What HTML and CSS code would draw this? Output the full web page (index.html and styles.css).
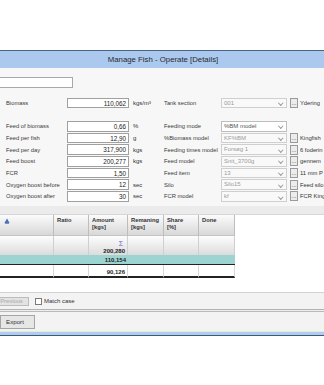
FILE: index.html
```html
<!DOCTYPE html>
<html>
<head>
<meta charset="utf-8">
<link rel="stylesheet" href="styles.css">
</head>
<body>
<div class="window">
  <div class="titlebar">Manage Fish - Operate [Details]</div>
  <div class="content">
    <div class="search"><div class="searchbox"></div></div>
    <div class="form">
      <div class="col-left">
        <div class="lrow"><span class="lbl">Biomass</span><span class="box">110,062</span><span class="unit">kgs/m³</span></div>
        <div class="lrow"></div>
        <div class="lrow"><span class="lbl">Feed of biomass</span><span class="box">0,66</span><span class="unit">%</span></div>
        <div class="lrow"><span class="lbl">Feed per fish</span><span class="box">12,90</span><span class="unit">g</span></div>
        <div class="lrow"><span class="lbl">Feed per day</span><span class="box">317,900</span><span class="unit">kgs</span></div>
        <div class="lrow"><span class="lbl">Feed boost</span><span class="box">200,277</span><span class="unit">kgs</span></div>
        <div class="lrow"><span class="lbl">FCR</span><span class="box">1,50</span><span class="unit"></span></div>
        <div class="lrow"><span class="lbl">Oxygen boost before</span><span class="box">12</span><span class="unit">sec</span></div>
        <div class="lrow"><span class="lbl">Oxygen boost after</span><span class="box">30</span><span class="unit">sec</span></div>
      </div>
      <div class="col-right">
        <div class="rrow"><span class="rlbl">Tank section</span><span class="combo">001<i class="arr"></i></span><span class="dots">...</span><span class="rtext">Ydering</span></div>
        <div class="rrow"></div>
        <div class="rrow"><span class="rlbl">Feeding mode</span><span class="combo active">%BM model<i class="arr"></i></span></div>
        <div class="rrow"><span class="rlbl">%Biomass model</span><span class="combo">KF%BM<i class="arr"></i></span><span class="dots">...</span><span class="rtext">Kingfish</span></div>
        <div class="rrow"><span class="rlbl">Feeding times model</span><span class="combo">Forsøg 1<i class="arr"></i></span><span class="dots">...</span><span class="rtext">6 foderin</span></div>
        <div class="rrow"><span class="rlbl">Feed model</span><span class="combo">Snit_3700g<i class="arr"></i></span><span class="dots">...</span><span class="rtext">gennem</span></div>
        <div class="rrow"><span class="rlbl">Feed item</span><span class="combo">13<i class="arr"></i></span><span class="dots">...</span><span class="rtext">11 mm P</span></div>
        <div class="rrow"><span class="rlbl">Silo</span><span class="combo">Silo15<i class="arr"></i></span><span class="dots">...</span><span class="rtext">Feed silo</span></div>
        <div class="rrow"><span class="rlbl">FCR model</span><span class="combo">kf<i class="arr"></i></span><span class="dots">...</span><span class="rtext">FCR King</span></div>
      </div>
    </div>
    <div class="splitter"></div>
    <div class="gridarea">
      <div class="grid">
        <div class="hd first"><svg width="6" height="6" viewBox="0 0 6 6"><path d="M3 0.5 L5.6 5 L0.4 5 Z" fill="#4d6fb8"/><path d="M1 5.6 H5" stroke="#4d6fb8" stroke-width="0.8"/></svg></div>
        <div class="hd">Ratio</div>
        <div class="hd">Amount<br>[kgs]</div>
        <div class="hd">Remaning<br>[kgs]</div>
        <div class="hd">Share<br>[%]</div>
        <div class="hd">Done</div>

        <div class="r1"></div>
        <div class="r1"></div>
        <div class="r1 num"><span class="sigma">Σ</span><b>200,280</b></div>
        <div class="r1"></div>
        <div class="r1"></div>
        <div class="r1"></div>

        <div class="r2"></div>
        <div class="r2"></div>
        <div class="r2 num"><b>110,154</b></div>
        <div class="r2"></div>
        <div class="r2"></div>
        <div class="r2"></div>

        <div class="r3"></div>
        <div class="r3"></div>
        <div class="r3 num"><b>90,126</b></div>
        <div class="r3"></div>
        <div class="r3"></div>
        <div class="r3"></div>
      </div>
    </div>
    <div class="bar1">
      <span class="btn disabled">Previous</span>
      <span class="check"></span>
      <span class="chklbl">Match case</span>
    </div>
    <div class="sep"></div>
    <div class="bar2"><span class="btn export">Export</span></div>
    <div class="bottomedge"></div>
  </div>
</div>
</body>
</html>
```

FILE: styles.css
```css
html, body {
  margin: 0;
  padding: 0;
  background: #ffffff;
}
body {
  width: 324px;
  height: 385px;
  overflow: hidden;
  font-family: "Liberation Sans", Arial, sans-serif;
  color: #333;
}
.window {
  margin-top: 50px;
  border-top: 1px solid #4a6380;
}
.titlebar {
  height: 17px;
  background: #abc8ef;
  text-align: center;
  font-size: 7.8px;
  line-height: 17px;
  color: #2a2a2a;
  padding-left: 2px;
}
.content {
  background: #f7f7f7;
}
.search {
  padding-top: 9px;
  height: 11px;
}
.searchbox {
  width: 72px;
  height: 9px;
  background: #fff;
  border: 1px solid #a8a8a8;
  border-left: none;
}
.form {
  display: flex;
  margin-top: 9px;
  font-size: 5.8px;
  overflow: hidden;
}
.form span {
  flex-shrink: 0;
  white-space: nowrap;
}
.col-left {
  width: 163px;
  flex-shrink: 0;
}
.col-right {
  flex-shrink: 0;
}
.lrow, .rrow {
  height: 11.7px;
  display: flex;
  align-items: center;
}
.lbl {
  width: 67px;
  padding-left: 6px;
  box-sizing: border-box;
  color: #3a3a3a;
}
.box {
  width: 62px;
  height: 10.7px;
  box-sizing: border-box;
  border: 1px solid #a0a0a0;
  background: #fff;
  text-align: right;
  font-size: 6.3px;
  line-height: 9px;
  padding-right: 2px;
  color: #222;
}
.unit {
  margin-left: 4px;
  font-size: 6px;
}
.rlbl {
  width: 58px;
  padding-left: 1px;
  box-sizing: border-box;
  color: #3a3a3a;
}
.combo {
  position: relative;
  width: 66px;
  height: 10.7px;
  box-sizing: border-box;
  border: 1px solid #cfcfcf;
  background: #f9f9f9;
  color: #9a9a9a;
  font-size: 6px;
  line-height: 9px;
  padding-left: 2px;
}
.combo.active {
  border-color: #bdbdbd;
  background: #fff;
  color: #555;
}
.arr {
  position: absolute;
  right: 4px;
  top: 2.5px;
  width: 2.5px;
  height: 2.5px;
  border-right: 0.8px solid #999;
  border-bottom: 0.8px solid #999;
  transform: rotate(45deg);
}
.dots {
  width: 8px;
  height: 10px;
  box-sizing: border-box;
  margin-left: 3px;
  border: 1px solid #9a9a9a;
  background: #ececec;
  font-size: 6px;
  line-height: 9px;
  text-align: center;
  color: #333;
  overflow: hidden;
}
.rtext {
  margin-left: 2px;
  color: #333;
}
.splitter {
  margin-top: 4px;
  height: 8px;
  background: #ebebeb;
  border-bottom: 1px solid #d6d6d6;
}
.gridarea {
  background: #fff;
  height: 77px;
}
.grid {
  display: grid;
  grid-template-columns: 54px 35px 39px 36px 35px 36px;
  width: 235px;
  grid-template-rows: 21px 19px 10px 13px;
  font-size: 5.8px;
}
.hd {
  background: linear-gradient(#fbfbfb, #d8d8d8);
  border-right: 1px solid #bdbdbd;
  border-bottom: 1px solid #c4c4c4;
  font-weight: bold;
  padding: 2px 0 0 3px;
  line-height: 6.5px;
  color: #333;
}
.hd.first {
  padding: 3px 0 0 4px;
}
.r1 {
  background: linear-gradient(#fdfdfd, #dcdcdc);
  border-right: 1px solid #cfcfcf;
}
.r2 {
  background: #9dd4d1;
  border-bottom: 1px solid #222;
}
.r3 {
  background: #fff;
  border-right: 1px solid #d8d8d8;
  border-bottom: 2px solid #222;
}
.num {
  display: flex;
  flex-direction: column;
  align-items: flex-end;
  justify-content: flex-end;
  padding-right: 2px;
  line-height: 8px;
  font-size: 6px;
  color: #222;
}
.sigma {
  color: #6666cc;
  font-size: 7px;
  line-height: 7px;
  margin-right: 2px;
}
.bar1 {
  border-top: 1px solid #d2d2d2;
  height: 16px;
  background: #f3f3f3;
  display: flex;
  align-items: center;
  font-size: 6px;
}
.btn {
  height: 9px;
  box-sizing: border-box;
  border: 1px solid #bcbcbc;
  background: #e3e3e3;
  font-size: 5.8px;
  line-height: 7px;
  text-align: center;
}
.btn.disabled {
  width: 35px;
  margin-left: -6px;
  color: #a9a9a9;
}
.check {
  width: 7px;
  height: 7px;
  box-sizing: border-box;
  border: 1px solid #7a7a7a;
  background: #fff;
  margin-left: 6px;
}
.chklbl {
  margin-left: 2px;
  color: #333;
}
.sep {
  height: 1px;
  border-top: 1px solid #b2b2b2;
  border-bottom: 1px solid #bababa;
  background: #eeeeee;
}
.bar2 {
  height: 19px;
  background: #f3f3f3;
  display: flex;
  align-items: center;
}
.btn.export {
  width: 35px;
  height: 14px;
  border-color: #a5a5a5;
  background: #e6e6e6;
  line-height: 12px;
  font-size: 6.2px;
  color: #333;
  text-align: left;
  padding-left: 5px;
}
.bottomedge {
  height: 3px;
  border-top: 1px solid #d9f2d6;
  background: #b3cbef;
  border-bottom: 1px solid #3f5a78;
}
```
